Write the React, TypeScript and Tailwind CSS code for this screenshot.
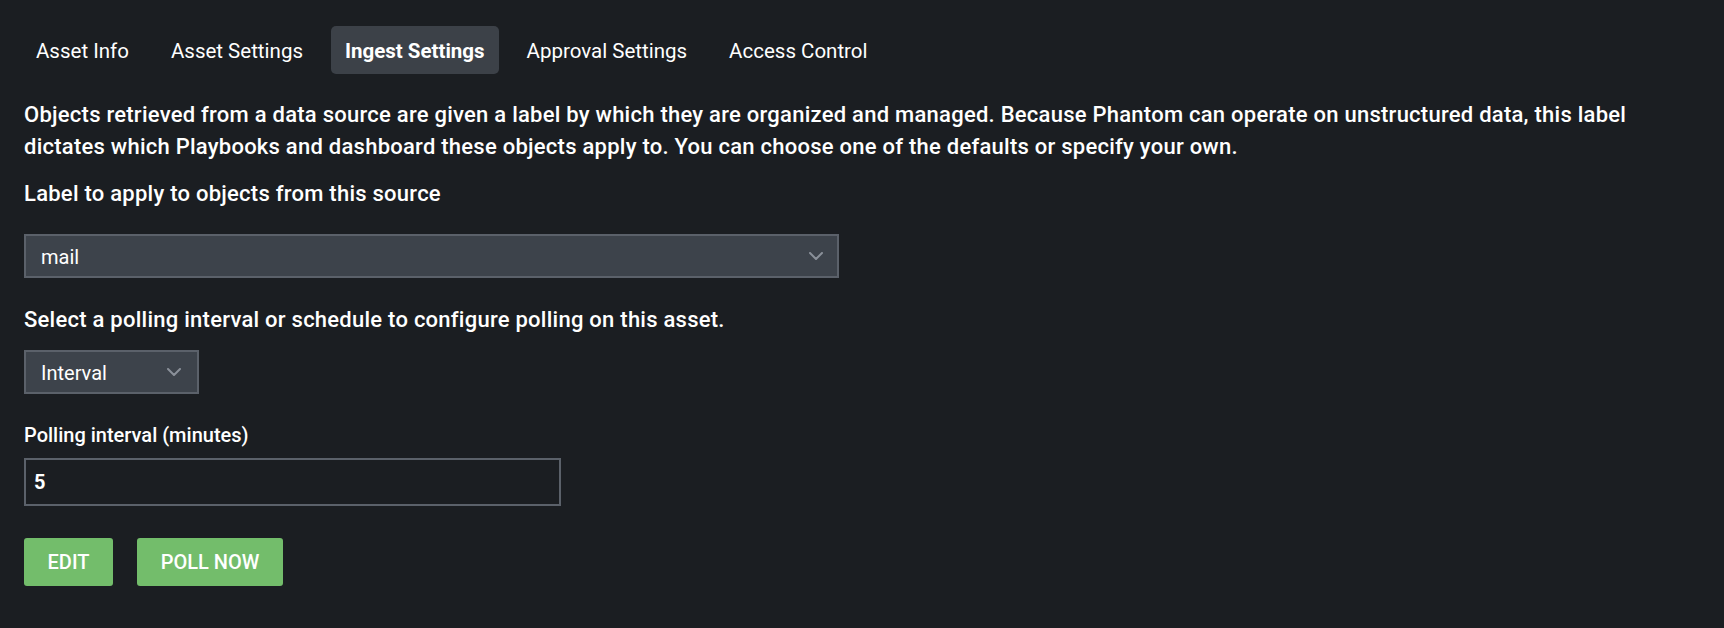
const tabs = ["Asset Info", "Asset Settings", "Ingest Settings", "Approval Settings", "Access Control"];

function Chevron() {
  return (
    <svg width="14" height="8" viewBox="0 0 14 8" fill="none" className="shrink-0">
      <polyline points="1,1 7,7 13,1" stroke="#8a9099" strokeWidth="2" strokeLinecap="round" strokeLinejoin="round" />
    </svg>
  );
}

export default function App() {
  const active = "Ingest Settings";

  return (
    <div className="min-h-screen bg-[#1b1e22] text-white font-['Roboto',sans-serif]">
      {/* Tabs */}
      <div className="flex items-center gap-[14px] pl-[22px] pt-[26px]">
        {tabs.map((tab) => (
          <button
            key={tab}
            className={`h-[48px] px-[14px] pt-[3px] rounded-[5px] text-[20.5px] ${
              tab === active ? "bg-[#3c4148] font-bold" : "font-normal"
            }`}
          >
            {tab}
          </button>
        ))}
      </div>

      <div className="px-6">
        <p className="mt-[25px] text-[22px] font-medium leading-[32px] tracking-[0.25px]">
          Objects retrieved from a data source are given a label by which they are organized and managed. Because
          Phantom can operate on unstructured data, this label dictates which Playbooks and dashboard these objects
          apply to. You can choose one of the defaults or specify your own.
        </p>

        <p className="mt-[15px] text-[22px] font-medium leading-[32px] tracking-[0.25px]">
          Label to apply to objects from this source
        </p>

        {/* Label select */}
        <div className="mt-[24px] w-[815px] h-[44px] flex items-center justify-between bg-[#3d434b] border-2 border-[#5b616a] pl-[15px] pr-[14px]">
          <span className="text-[20px] pt-[2px]">mail</span>
          <Chevron />
        </div>

        <p className="mt-[26px] text-[22px] font-medium leading-[32px] tracking-[0.25px]">
          Select a polling interval or schedule to configure polling on this asset.
        </p>

        {/* Interval select */}
        <div className="mt-[14px] w-[175px] h-[44px] flex items-center justify-between bg-[#3d434b] border-2 border-[#5b616a] pl-[15px] pr-[16px]">
          <span className="text-[20px] pt-[2px]">Interval</span>
          <Chevron />
        </div>

        <p className="mt-[26px] text-[20px] font-medium leading-[30px]">Polling interval (minutes)</p>

        {/* Interval input */}
        <div className="mt-[8px] w-[537px] h-[48px] flex items-center border-2 border-[#5b616a] pl-[8px]">
          <span className="text-[20px] font-bold">5</span>
        </div>

        <div className="mt-[32px] flex gap-[24px]">
          <button className="w-[89px] h-[48px] rounded-[3px] bg-[#73bd6b] text-[20px] font-medium">EDIT</button>
          <button className="w-[146px] h-[48px] rounded-[3px] bg-[#73bd6b] text-[20px] font-medium">POLL NOW</button>
        </div>
      </div>
    </div>
  );
}
